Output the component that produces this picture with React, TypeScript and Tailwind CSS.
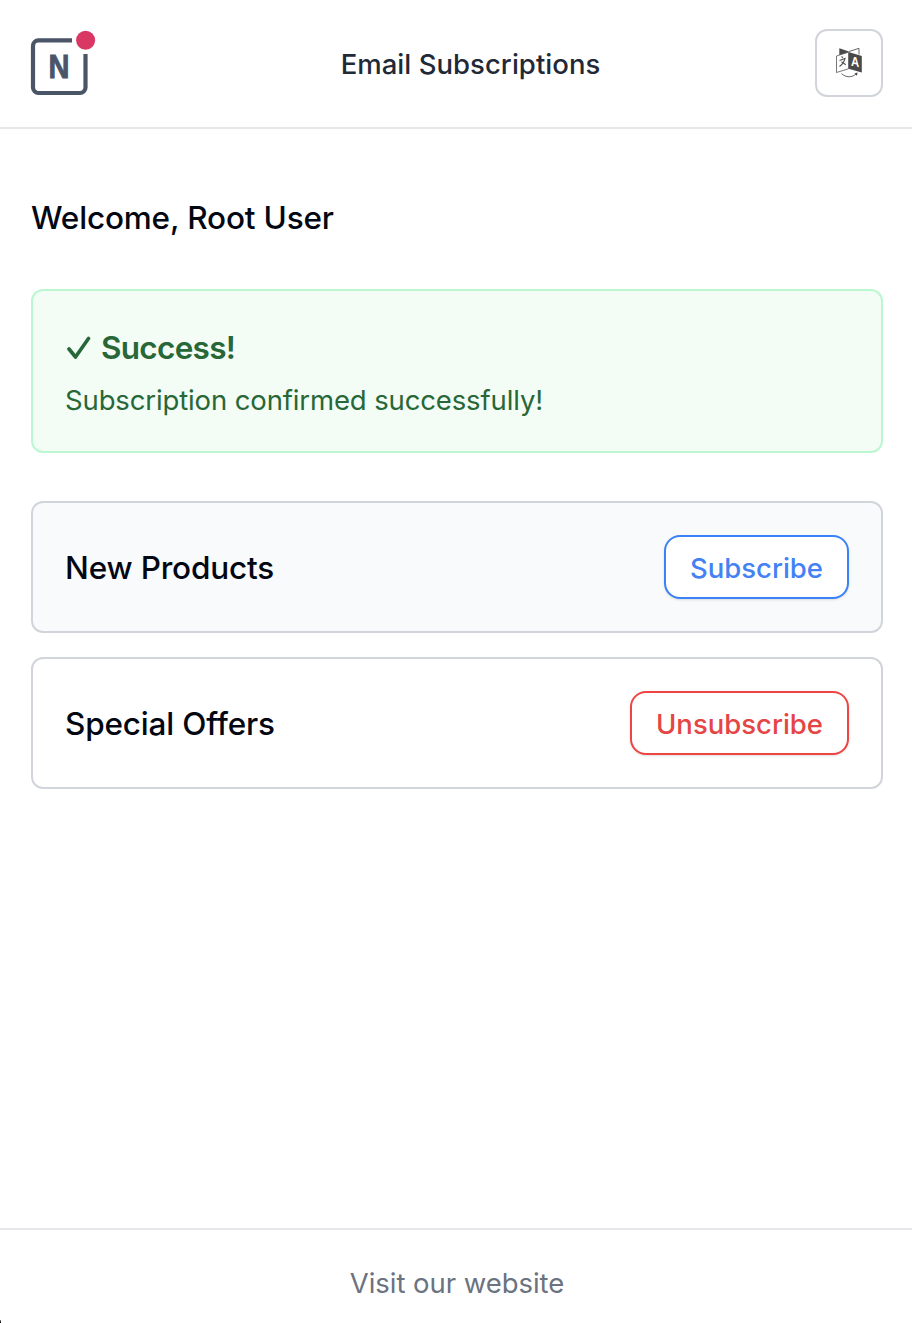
import React from "react";

function Logo() {
  return (
    <svg viewBox="0 0 66 66" className="h-[66px] w-[66px]" role="img" aria-label="Logo">
      <path
        d="M42 10.300H8.500A5.500 5.500 0 0 0 3 15.800V57.500A5.500 5.500 0 0 0 8.500 63H50A5.500 5.500 0 0 0 55.500 57.500V24"
        fill="none"
        stroke="#4a5568"
        strokeWidth="4.200"
      />
      <circle cx="55.600" cy="10.300" r="9.500" fill="#d93764" />
      <text
        x="0"
        y="0"
        transform="translate(29 47.700) scale(.88 1)"
        textAnchor="middle"
        fontSize="33"
        fontWeight="700"
        fill="#4a5568"
        stroke="#4a5568"
        strokeWidth=".9"
        fontFamily="'Liberation Sans', sans-serif"
      >
        N
      </text>
    </svg>
  );
}

function TranslateIcon() {
  return (
    <svg viewBox="0 0 50 50" className="h-[50px] w-[50px] shrink-0" aria-hidden="true">
      <path d="M15.300 10.300 25 13.500 22 15.200 15.300 17.200Z" fill="#4a4a4a" />
      <path d="M25 13.500 35 10.300V16.500" fill="none" stroke="#555" strokeWidth=".9" />
      <path d="M24.500 14 37.800 18V34.500L24.500 30.800Z" fill="#4a4a4a" />
      <path d="M24.500 14.200 12.500 18V34.500L24.500 30.800Z" fill="#fff" stroke="#555" strokeWidth=".8" />
      <path
        d="m17.500 18.500 1.500 1.200M15.500 22.500l5.500-2c-1 3.500-2.500 6-5.500 8M17.500 23.700l4.300 3"
        fill="none"
        stroke="#555"
        strokeWidth="1.100"
      />
      <text
        x="0"
        y="0"
        transform="translate(31.200 28.500) skewY(10) scale(.85 1)"
        textAnchor="middle"
        fontSize="13.500"
        fontWeight="700"
        fill="#fff"
        fontFamily="'Liberation Sans', sans-serif"
      >
        A
      </text>
      <path d="M17.500 35.700c4.500 4 10.500 4 14.500 .3" fill="none" stroke="#555" strokeWidth=".9" />
      <path d="m33.500 34.500-.5 3.200-2.500-2.200Z" fill="#444" />
    </svg>
  );
}

function SubscriptionCard({
  name,
  action,
  cardClass,
  buttonClass,
}: {
  name: string;
  action: string;
  cardClass: string;
  buttonClass: string;
}) {
  return (
    <div
      className={`flex h-[132px] items-center justify-between rounded-xl border-2 border-[#d1d5db] px-8 ${cardClass}`}
    >
      <h2 className="pt-0.5 text-[31.5px] font-medium tracking-[-0.17px] text-[#030712]">{name}</h2>
      <button
        className={`flex h-16 items-center justify-center rounded-2xl border-2 bg-white pt-[3px] text-[27.5px] font-medium shadow-sm ${buttonClass}`}
      >
        {action}
      </button>
    </div>
  );
}

export default function App() {
  return (
    <div className="relative flex h-[1323px] w-[912px] flex-col overflow-hidden bg-white font-['Inter',sans-serif]">
      <header className="flex h-[129px] shrink-0 items-center justify-between border-b-2 border-[#e5e7eb] pr-[29px] pb-[2px] pl-[30px]">
        <div className="w-24">
          <Logo />
        </div>
        <h1 className="pt-1 text-[27.5px] font-medium tracking-[0.04px] text-[#1f2937]">Email Subscriptions</h1>
        <button
          className="flex h-[68px] w-[68px] items-center justify-center rounded-xl border-2 border-[#d1d5db] bg-white"
          aria-label="Change language"
        >
          <TranslateIcon />
        </button>
      </header>

      <main className="flex grow flex-col pt-16 pr-[29px] pl-[31px]">
        <p className="h-12 text-[31.5px] leading-[50px] font-medium tracking-[-0.17px] text-[#030712]">
          Welcome, Root User
        </p>
        <section className="mt-12 flex h-[164px] flex-col rounded-xl border-2 border-[#bbf7d0] bg-[#f3fdf5] px-8 pt-8">
          <div className="flex h-12 items-center text-[#276738]">
            <svg viewBox="0 0 26 26" className="mt-0.5 mr-2.5 h-[26px] w-[26px]" aria-hidden="true">
              <path
                d="M4 14 10.500 22 23.500 3.500"
                fill="none"
                stroke="currentColor"
                strokeWidth="3.600"
                strokeLinecap="round"
                strokeLinejoin="round"
              />
            </svg>
            <span className="pt-0.5 text-[31.5px] font-semibold tracking-[-0.7px]">Success!</span>
          </div>
          <p className="mt-2 text-[27.5px] leading-[42px] tracking-[-0.13px] text-[#276738]">
            Subscription confirmed successfully!
          </p>
        </section>

        <div className="mt-12 flex flex-col gap-6">
          <SubscriptionCard
            name="New Products"
            action="Subscribe"
            cardClass="bg-[#f9fafb]"
            buttonClass="w-[185px] border-[#3b82f6] text-[#4381f5]"
          />
          <SubscriptionCard
            name="Special Offers"
            action="Unsubscribe"
            cardClass="bg-white"
            buttonClass="w-[219px] border-[#ef4444] text-[#e54545]"
          />
        </div>
      </main>

      <footer className="flex h-[95px] shrink-0 items-start justify-center border-t-2 border-[#e5e7eb] pt-8">
        <a className="pl-0.5 text-[27.5px] leading-[42px] tracking-[-0.05px] text-[#6b7280]">Visit our website</a>
      </footer>
      <span className="absolute bottom-0 left-0 h-[3px] w-px bg-linear-to-b from-[#999] to-black" />
    </div>
  );
}
